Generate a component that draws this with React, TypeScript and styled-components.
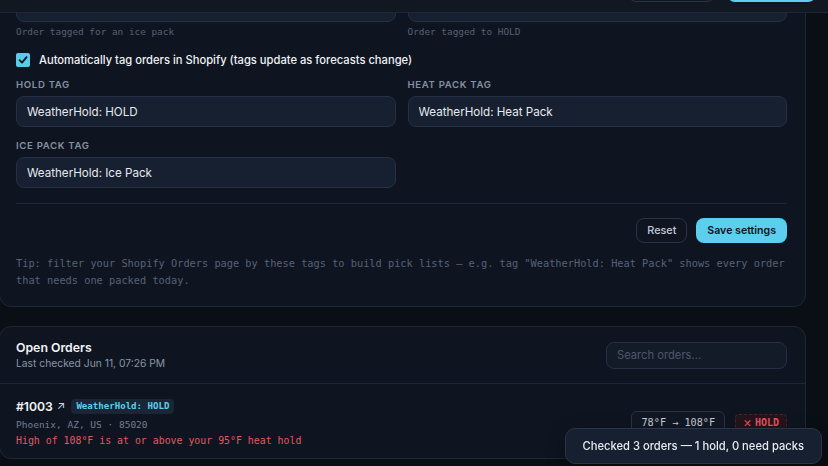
import React from "react";
import styled, {createGlobalStyle} from "styled-components";

const GlobalStyle = createGlobalStyle`
    html, body {
        margin: 0;
        padding: 0;
        background: #0a0e15;
        font-family: Inter, "Noto Sans", sans-serif;
        color: #e6e9ef;
    }
    * {
        box-sizing: border-box;
    }
`;

const mono = `"DejaVu Sans Mono", "Liberation Mono", monospace`;

const App = () => {
    return (
        <>
            <GlobalStyle />
            <Viewport>
                <TopBar>
                    <GhostButton $minWidth={87}>Run check</GhostButton>
                    <PrimaryButton $minWidth={89}>Connect</PrimaryButton>
                </TopBar>
                <Main>
                    <Card>
                        <SettingsBody>
                            <Grid>
                                <Field>
                                    <Label>Ice pack below (°F)</Label>
                                    <Input defaultValue="40" />
                                    <Hint>Order tagged for an ice pack</Hint>
                                </Field>
                                <Field>
                                    <Label>Hold at or above (°F)</Label>
                                    <Input defaultValue="95" />
                                    <Hint>Order tagged to HOLD</Hint>
                                </Field>
                            </Grid>
                            <CheckRow>
                                <CheckBox>
                                    <svg width="10" height="10" viewBox="0 0 10 10">
                                        <path d="M1.6 5.2 L4 7.6 L8.6 2.2" fill="none" stroke="#0d1420" strokeWidth="1.8" strokeLinecap="round" strokeLinejoin="round" />
                                    </svg>
                                </CheckBox>
                                <CheckLabel>Automatically tag orders in Shopify (tags update as forecasts change)</CheckLabel>
                            </CheckRow>
                            <TagGrid>
                                <Field>
                                    <Label>Hold tag</Label>
                                    <Input defaultValue="WeatherHold: HOLD" />
                                </Field>
                                <Field>
                                    <Label>Heat pack tag</Label>
                                    <Input defaultValue="WeatherHold: Heat Pack" />
                                </Field>
                                <Field>
                                    <Label>Ice pack tag</Label>
                                    <Input defaultValue="WeatherHold: Ice Pack" />
                                </Field>
                            </TagGrid>
                            <Divider />
                            <Actions>
                                <GhostButton>Reset</GhostButton>
                                <PrimaryButton>Save settings</PrimaryButton>
                            </Actions>
                            <Tip>
                                Tip: filter your Shopify Orders page by these tags to build pick lists — e.g. tag "WeatherHold: Heat Pack" shows every order that needs one packed today.
                            </Tip>
                        </SettingsBody>
                    </Card>

                    <Card>
                        <OrdersHeader>
                            <div>
                                <Title>Open Orders</Title>
                                <Sub>Last checked Jun 11, 07:26 PM</Sub>
                            </div>
                            <Search placeholder="Search orders..." />
                        </OrdersHeader>
                        <OrderRow>
                            <OrderInfo>
                                <OrderTitle>
                                    <OrderNumber>#1003</OrderNumber>
                                    <Arrow>↗</Arrow>
                                    <TagBadge>WeatherHold: HOLD</TagBadge>
                                </OrderTitle>
                                <Place>Phoenix, AZ, US · 85020</Place>
                                <Reason>High of 108°F is at or above your 95°F heat hold</Reason>
                            </OrderInfo>
                            <OrderMeta>
                                <TempPill>78°F → 108°F</TempPill>
                                <HoldBadge>
                                    <Cross>✕</Cross>HOLD
                                </HoldBadge>
                            </OrderMeta>
                        </OrderRow>
                    </Card>
                </Main>
            </Viewport>
            <Toast>Checked 3 orders — 1 hold, 0 need packs</Toast>
        </>
    );
};
export default App;

const Viewport = styled.div`
    height: 466px;
    overflow: hidden;
`;

const TopBar = styled.header`
    position: relative;
    z-index: 2;
    margin-top: -40px;
    height: 53px;
    display: flex;
    justify-content: flex-end;
    align-items: flex-end;
    gap: 12px;
    padding: 0 12px 10px 0;
    background: #111822;
    border-bottom: 1px solid #1d2634;
`;

const Main = styled.main`
    margin-top: -58px;
    padding-right: 22px;
    display: flex;
    flex-direction: column;
    gap: 19px;
`;

const Card = styled.section`
    margin-left: -1px;
    background: #0f1520;
    border: 1px solid #1e2735;
    border-radius: 12px;
    overflow: hidden;
`;

const SettingsBody = styled.div`
    padding: 16px 18px 18px 16px;
    display: flex;
    flex-direction: column;
`;

const Grid = styled.div`
    display: grid;
    grid-template-columns: 1fr 1fr;
    gap: 12px;
`;

const TagGrid = styled(Grid)`
    margin-top: 8px;
    row-gap: 11px;
`;

const Field = styled.div`
    display: flex;
    flex-direction: column;
`;

const Label = styled.label`
    font-size: 9.6px;
    line-height: 15px;
    font-weight: 600;
    letter-spacing: 0.07em;
    text-transform: uppercase;
    color: #8490a2;
    margin-bottom: 4px;
`;

const Input = styled.input`
    height: 31px;
    width: 100%;
    padding: 0 10px;
    background: #162030;
    border: 1px solid #243045;
    border-radius: 8px;
    color: #e6e9ef;
    font-family: Inter, sans-serif;
    font-size: 11.6px;
    outline: none;
`;

const Hint = styled.div`
    margin-top: 3px;
    font-family: ${mono};
    font-size: 9.4px;
    line-height: 14px;
    color: #566073;
`;

const CheckRow = styled.div`
    margin-top: 12px;
    height: 18px;
    display: flex;
    align-items: center;
    gap: 9px;
`;

const CheckBox = styled.span`
    width: 14px;
    height: 14px;
    border-radius: 2px;
    background: #58cdea;
    display: flex;
    align-items: center;
    justify-content: center;
`;

const CheckLabel = styled.span`
    font-size: 11.2px;
    font-weight: 500;
    color: #eef1f5;
`;

const Divider = styled.hr`
    margin: 15px 0 0;
    border: 0;
    border-top: 1px solid #1e2735;
`;

const Actions = styled.div`
    margin-top: 14px;
    display: flex;
    justify-content: flex-end;
    gap: 9px;
`;

const GhostButton = styled.button<{$minWidth?: number}>`
    height: 25px;
    padding: 0 10px;
    min-width: ${({$minWidth}) => ($minWidth ? `${$minWidth}px` : "auto")};
    background: transparent;
    border: 1px solid #283346;
    border-radius: 8px;
    color: #c2cad6;
    font-family: Inter, sans-serif;
    font-size: 10.8px;
    font-weight: 500;
`;

const PrimaryButton = styled.button<{$minWidth?: number}>`
    height: 25px;
    padding: 0 11px;
    min-width: ${({$minWidth}) => ($minWidth ? `${$minWidth}px` : "auto")};
    background: #5ccff0;
    border: 0;
    border-radius: 8px;
    color: #0b1220;
    font-family: Inter, sans-serif;
    font-size: 10.6px;
    font-weight: 600;
`;

const Tip = styled.p`
    margin: 12px 0 0;
    font-family: ${mono};
    font-size: 10.3px;
    line-height: 16.5px;
    color: #576174;
`;

const OrdersHeader = styled.div`
    display: flex;
    align-items: center;
    justify-content: space-between;
    padding: 13px 18px 13px 16px;
    border-bottom: 1px solid #1e2735;
`;

const Title = styled.div`
    font-size: 12.3px;
    line-height: 16px;
    font-weight: 600;
    color: #f1f3f6;
`;

const Sub = styled.div`
    font-size: 10.3px;
    line-height: 14px;
    color: #8a94a5;
`;

const Search = styled.input`
    width: 181px;
    height: 27px;
    padding: 0 10px;
    background: #131b28;
    border: 1px solid #243045;
    border-radius: 8px;
    color: #e6e9ef;
    font-family: Inter, sans-serif;
    font-size: 11.2px;
    outline: none;

    &::placeholder {
        color: #4d5768;
    }
`;

const OrderRow = styled.div`
    display: flex;
    align-items: center;
    justify-content: space-between;
    padding: 13px 18px 10px 16px;
`;

const OrderInfo = styled.div`
    display: flex;
    flex-direction: column;
`;

const OrderTitle = styled.div`
    height: 18px;
    display: flex;
    align-items: center;
    gap: 4px;
`;

const OrderNumber = styled.span`
    font-size: 12.2px;
    font-weight: 600;
    color: #f1f3f6;
`;

const Arrow = styled.span`
    font-size: 11px;
    color: #d6dbe3;
    margin-right: 2px;
`;

const TagBadge = styled.span`
    height: 15px;
    padding: 0 5px;
    display: flex;
    align-items: center;
    border-radius: 4px;
    background: #1a2636;
    color: #5ccff0;
    font-family: ${mono};
    font-size: 9.1px;
    font-weight: 700;
`;

const Place = styled.div`
    margin-top: 1.5px;
    font-family: ${mono};
    font-size: 9.5px;
    line-height: 15px;
    color: #747e90;
`;

const Reason = styled(Place)`
    font-size: 9.9px;
    color: #e0595f;
`;

const OrderMeta = styled.div`
    display: flex;
    align-items: center;
    gap: 10px;
`;

const TempPill = styled.span`
    height: 24px;
    padding: 0 9px;
    display: flex;
    align-items: center;
    border: 1px solid #283346;
    border-radius: 6px;
    background: #111824;
    font-family: ${mono};
    font-size: 10.2px;
    color: #c6cdd8;
`;

const HoldBadge = styled.span`
    height: 18px;
    padding: 0 7px;
    display: flex;
    align-items: center;
    gap: 3px;
    border: 1px dashed #4a2430;
    border-radius: 4px;
    background: #24141b;
    font-family: ${mono};
    font-size: 10px;
    font-weight: 700;
    color: #e4525b;
`;

const Cross = styled.span`
    font-family: "DejaVu Sans", sans-serif;
    font-size: 10.5px;
    font-weight: 700;
`;

const Toast = styled.div`
    position: fixed;
    right: 6px;
    bottom: 2px;
    height: 36px;
    display: flex;
    align-items: center;
    padding: 0 17px;
    background: #172030;
    border: 1px solid #2a3547;
    border-radius: 10px;
    font-size: 11.2px;
    font-weight: 500;
    color: #e8ebf0;
    box-shadow: 0 6px 18px rgba(0, 0, 0, 0.4);
`;
